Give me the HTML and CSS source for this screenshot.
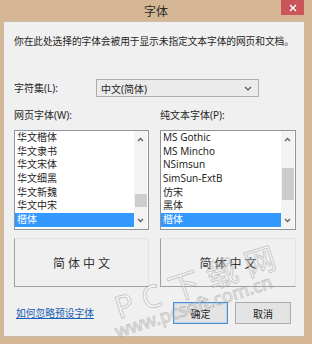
FILE: index.html
```html
<!DOCTYPE html>
<html lang="zh-CN">
<head>
  <meta charset="UTF-8">
  <title>字体</title>
  <link rel="stylesheet" href="styles.css">
</head>
<body>
  <div class="window">
    <div class="titlebar">
      <span></span>
      <span class="title">字体</span>
      <span class="close">
        <svg width="8" height="8" viewBox="0 0 8 8"><path d="M1 1L7 7M7 1L1 7" stroke="#fff" stroke-width="1.4"/></svg>
      </span>
    </div>

    <div class="content">
      <p class="desc">你在此处选择的字体会被用于显示未指定文本字体的网页和文档。</p>

      <div class="charset-row">
        <span class="label">字符集(L):</span>
        <div class="select">
          <span>中文(简体)</span>
          <svg width="8" height="5" viewBox="0 0 8 5"><path d="M1 1L4 4L7 1" fill="none" stroke="#555" stroke-width="1.2"/></svg>
        </div>
      </div>

      <div class="columns">
        <div class="col">
          <div class="label">网页字体(W):</div>
          <div class="listbox">
            <ul class="items">
              <li>华文楷体</li>
              <li>华文隶书</li>
              <li>华文宋体</li>
              <li>华文细黑</li>
              <li>华文新魏</li>
              <li>华文中宋</li>
              <li class="selected">楷体</li>
            </ul>
            <div class="scrollbar">
              <svg class="arrow" width="7" height="5" viewBox="0 0 7 5"><path d="M1 4L3.5 1.5L6 4" fill="none" stroke="#606060" stroke-width="1.3"/></svg>
              <div class="thumb thumb-left"></div>
              <svg class="arrow down" width="7" height="5" viewBox="0 0 7 5"><path d="M1 1L3.5 3.5L6 1" fill="none" stroke="#606060" stroke-width="1.3"/></svg>
            </div>
          </div>
          <div class="preview"><span class="sample">简体中文</span></div>
        </div>

        <div class="col">
          <div class="label">纯文本字体(P):</div>
          <div class="listbox">
            <ul class="items">
              <li>MS Gothic</li>
              <li>MS Mincho</li>
              <li>NSimsun</li>
              <li>SimSun-ExtB</li>
              <li>仿宋</li>
              <li>黑体</li>
              <li class="selected">楷体</li>
            </ul>
            <div class="scrollbar">
              <svg class="arrow" width="7" height="5" viewBox="0 0 7 5"><path d="M1 4L3.5 1.5L6 4" fill="none" stroke="#606060" stroke-width="1.3"/></svg>
              <div class="thumb thumb-right"></div>
              <svg class="arrow down" width="7" height="5" viewBox="0 0 7 5"><path d="M1 1L3.5 3.5L6 1" fill="none" stroke="#606060" stroke-width="1.3"/></svg>
            </div>
          </div>
          <div class="preview"><span class="sample">简体中文</span></div>
        </div>
      </div>

      <div class="footer">
        <a class="link" href="#">如何忽略预设字体</a>
        <div class="buttons">
          <button class="btn default">确定</button>
          <button class="btn">取消</button>
        </div>
      </div>
    </div>

    <!-- watermark over the dialog -->
    <div class="wm wm-big">PC下载网</div>
    <div class="wm wm-url">www.pcsoft.com.cn</div>
  </div>
</body>
</html>
```

FILE: styles.css
```css
body {
  margin: 0;
  font-family: "Noto Sans", "Noto Sans CJK SC", sans-serif;
  color: #262626;
}

.window {
  position: relative;
  width: 312px;
  height: 344px;
  background-color: #d6b795;
  overflow: hidden;
}

.titlebar {
  height: 22px;
  display: grid;
  grid-template-columns: 1fr auto 1fr;
  align-items: center;
}

.title {
  font-size: 12px;
  color: #2b2b2b;
}

.close {
  justify-self: end;
  align-self: start;
  width: 23px;
  height: 15px;
  margin-right: 8px;
  background-color: #c9545a;
  display: flex;
  justify-content: center;
  align-items: center;
}

.content {
  box-sizing: border-box;
  width: 300px;
  height: 314px;
  margin-left: 4px;
  padding: 13px 8px 0 10px;
  background-color: #f0f0f0;
  box-shadow: 0 0 0 1px #cbbba9;
  font-size: 10px;
}

.desc {
  margin: 0;
  line-height: 14px;
  font-size: 9.75px;
  white-space: nowrap;
  letter-spacing: -0.1px;
}

.charset-row {
  margin-top: 30px;
  display: flex;
  align-items: center;
  height: 18px;
}

.charset-row .label {
  width: 82px;
}

.select {
  box-sizing: border-box;
  width: 163px;
  height: 18px;
  border: 1px solid #adadad;
  background-color: #ebebeb;
  display: flex;
  align-items: center;
  justify-content: space-between;
  padding: 0 6px 0 4px;
}

.columns {
  margin-top: 11px;
  display: flex;
  gap: 11px;
}

.col {
  width: 136px;
}

.col:first-child {
  width: 135px;
}

.label {
  line-height: 14px;
}

.listbox {
  box-sizing: border-box;
  margin-top: 8px;
  height: 100px;
  border: 1px solid #8f949b;
  background-color: #fff;
  display: flex;
}

.items {
  list-style: none;
  margin: 0;
  padding: 0;
  flex: 1;
}

.items li {
  height: 13.7px;
  line-height: 13.7px;
  padding-left: 2px;
}

.items li.selected {
  background-color: #3399ff;
  color: #fff;
}

.scrollbar {
  width: 13px;
  margin-right: 1px;
  background-color: #f3f3f3;
  display: flex;
  flex-direction: column;
  align-items: center;
}

.arrow {
  margin-top: 6px;
}

.arrow.down {
  margin-top: auto;
  margin-bottom: 6px;
}

.thumb {
  width: 12px;
  background-color: #cdcdcd;
}

.thumb-left {
  margin-top: 52px;
  height: 13px;
}

.thumb-right {
  margin-top: 26px;
  height: 32px;
}

.preview {
  box-sizing: border-box;
  margin-top: 8px;
  height: 49px;
  border: 1px solid #a0a0a0;
  border-right-color: #e3e3e3;
  border-top-color: #e3e3e3;
  display: flex;
  justify-content: center;
  align-items: center;
}

.sample {
  font-family: "Noto Sans CJK SC", sans-serif;
  font-size: 12px;
  letter-spacing: 3px;
  padding-left: 3px;
  color: #333;
}

.footer {
  margin-top: 15px;
  display: flex;
  align-items: center;
  justify-content: space-between;
  padding-left: 2px;
  padding-right: 5px;
}

.link {
  color: #1a5fb4;
  text-decoration: underline;
  font-size: 9.75px;
}

.buttons {
  display: flex;
  gap: 7px;
}

.btn {
  box-sizing: border-box;
  width: 56px;
  height: 22px;
  border: 1px solid #adadad;
  background-color: #e3e3e3;
  font-family: inherit;
  font-size: 10px;
  color: #1a1a1a;
  padding: 0;
}

.btn.default {
  width: 55px;
  border-color: #4f8ccc;
  box-shadow: inset 0 0 0 1px #b9d5f0;
}

.wm {
  position: absolute;
  color: rgba(255, 255, 255, 0.35);
  -webkit-text-stroke: 1px rgba(120, 120, 120, 0.35);
  white-space: nowrap;
  transform-origin: 0 100%;
  transform: rotate(-18deg);
}

.wm-big {
  left: 120px;
  top: 292px;
  font-size: 31px;
  line-height: 30px;
  letter-spacing: 9px;
}

.wm-url {
  left: 118px;
  top: 322px;
  font-size: 18px;
  line-height: 18px;
}
```
